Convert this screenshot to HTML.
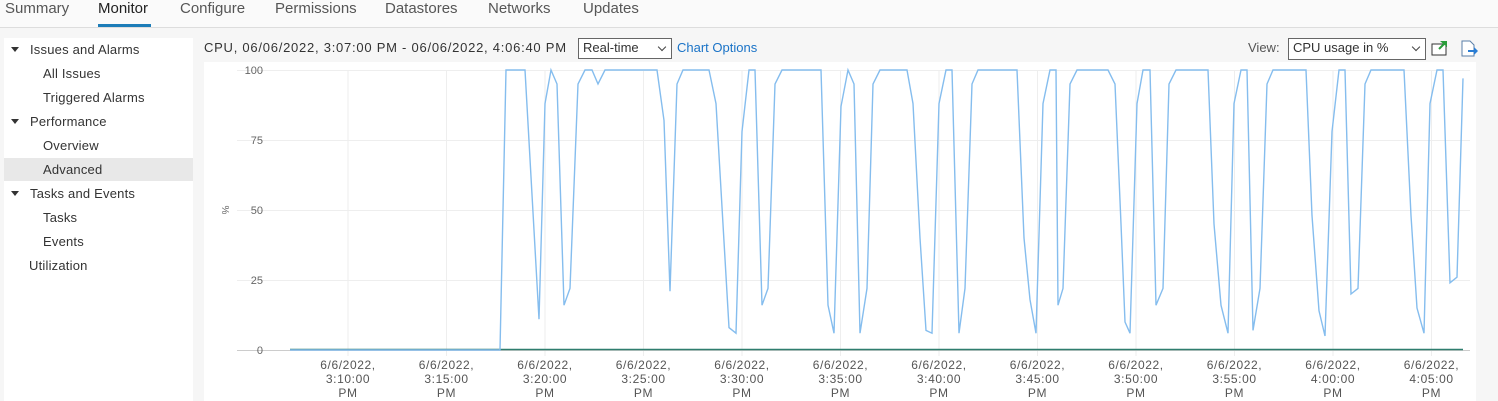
<!DOCTYPE html>
<html><head><meta charset="utf-8"><style>
body{margin:0;width:1498px;height:401px;background:#f6f6f6;font-family:"Liberation Sans",sans-serif;overflow:hidden;position:relative;color:#333}
.tabs{position:absolute;left:0;top:0;width:1498px;height:27px;border-bottom:1px solid #ddd;background:#fafafa}
.tab{position:absolute;top:0;font-size:15px;color:#565656}
.side{position:absolute;left:4px;top:38px;width:189px;height:363px;background:#fff}
.it{position:absolute;font-size:13px;color:#333;letter-spacing:0.2px}
.sel{position:absolute;left:4px;top:158px;width:189px;height:23px;background:#e8e8e8}
.tri{position:absolute;width:0;height:0;border-left:4px solid transparent;border-right:4px solid transparent;border-top:5px solid #333}
.sb{position:absolute;border:1px solid #666;background:#fff;font-size:13px;padding:1px 4px;box-sizing:border-box}
.chev{position:absolute;right:6px;top:5px;width:5px;height:5px;border-right:1.6px solid #444;border-bottom:1.6px solid #444;transform:rotate(45deg)}
</style></head><body>
<div class="tabs">
<span class="tab" style="left:5px">Summary</span>
<span class="tab" style="left:98px;color:#222">Monitor</span>
<div style="position:absolute;left:98px;top:24px;width:53px;height:3px;background:#1d7db8"></div>
<span class="tab" style="left:180px">Configure</span>
<span class="tab" style="left:275px">Permissions</span>
<span class="tab" style="left:385px">Datastores</span>
<span class="tab" style="left:488px">Networks</span>
<span class="tab" style="left:583px">Updates</span>
</div>
<div class="side"></div>
<div class="sel"></div>
<div class="tri" style="left:11px;top:47px"></div><span class="it" style="left:30px;top:42px">Issues and Alarms</span>
<span class="it" style="left:43px;top:66px">All Issues</span>
<span class="it" style="left:43px;top:90px">Triggered Alarms</span>
<div class="tri" style="left:11px;top:119px"></div><span class="it" style="left:30px;top:114px">Performance</span>
<span class="it" style="left:43px;top:138px">Overview</span>
<span class="it" style="left:43px;top:162px">Advanced</span>
<div class="tri" style="left:11px;top:191px"></div><span class="it" style="left:30px;top:186px">Tasks and Events</span>
<span class="it" style="left:43px;top:210px">Tasks</span>
<span class="it" style="left:43px;top:234px">Events</span>
<span class="it" style="left:29px;top:258px">Utilization</span>

<span style="position:absolute;left:204px;top:40px;font-size:13px;color:#333;letter-spacing:0.75px;white-space:nowrap">CPU, 06/06/2022, 3:07:00 PM - 06/06/2022, 4:06:40 PM</span>
<div class="sb" style="left:578px;top:38px;width:94px;height:21px">Real-time<span class="chev"></span></div>
<span style="position:absolute;left:677px;top:40px;font-size:13px;color:#1a73c7">Chart Options</span>
<span style="position:absolute;left:1248px;top:40px;font-size:13px;color:#555">View:</span>
<div class="sb" style="left:1288px;top:38px;width:138px;height:22px">CPU usage in %<span class="chev"></span></div>
<svg style="position:absolute;left:1431px;top:40px" width="18" height="16"><rect x="1" y="4" width="14" height="11" fill="#fff" stroke="#333"/><path d="M9 1h7v6z" fill="#2a9d3a"/><path d="M8 9l6-6" stroke="#2a9d3a" stroke-width="2"/></svg>
<svg style="position:absolute;left:1461px;top:40px" width="18" height="17"><path d="M1 1h8l4 4v11H1z" fill="#fff" stroke="#5a7fa8"/><path d="M7 10h6V7l4 4-4 4v-3H7z" fill="#2a7dd4"/></svg>

<div style="position:absolute;left:204px;top:62px;width:1272px;height:339px;background:#fff"></div>
<svg style="position:absolute;left:0;top:0" width="1498" height="401" id="ch">
<g stroke="#eee" stroke-width="1">
<line x1="237" x2="1470" y1="70.5" y2="70.5"/><line x1="237" x2="1470" y1="140.5" y2="140.5"/><line x1="237" x2="1470" y1="210.5" y2="210.5"/><line x1="237" x2="1470" y1="280.5" y2="280.5"/>
</g>
<g id="vg" stroke="#eee"></g>
<line x1="237" x2="1470" y1="350.5" y2="350.5" stroke="#ccc"/>
<line x1="290" x2="1463" y1="349.5" y2="349.5" stroke="#2e7d6e" stroke-width="1.5"/>
<g font-size="11" fill="#666" text-anchor="end" font-family="Liberation Sans"><text x="263" y="74">100</text><text x="263" y="144">75</text><text x="263" y="214">50</text><text x="263" y="284">25</text><text x="263" y="354">0</text>
<text transform="translate(222,210) rotate(90)" text-anchor="middle" font-size="10">%</text></g>
<polyline id="pl" fill="none" stroke="#85bdee" stroke-width="1.4"/>
<g id="lb" font-size="12" fill="#555" text-anchor="middle" font-family="Liberation Sans" letter-spacing="0.6"></g>
</svg>
<script>
var d=[290,0,500,0,506,100,525,100,539,11,545,88,551,100,557,95,564,16,570,22,578,95,585,100,592,100,598,95,605,100,657,100,664,82,670,21,677,95,683,100,709,100,716,88,729,8,736,6,742,78,749,100,755,100,762,16,768,22,775,95,782,100,821,100,828,16,834,6,841,87,848,100,854,95,860,6,867,22,873,95,880,100,907,100,913,88,920,40,926,7,932,6,939,88,946,100,952,100,959,6,965,22,972,95,978,100,1017,100,1024,40,1030,18,1036,6,1043,88,1050,100,1056,100,1058,16,1063,22,1070,95,1077,100,1108,100,1115,95,1121,45,1125,10,1130,6,1137,88,1143,100,1150,100,1156,16,1163,22,1169,95,1176,100,1208,100,1214,45,1221,16,1228,6,1234,88,1241,100,1247,100,1253,7,1260,22,1267,95,1273,100,1306,100,1312,48,1319,14,1325,5,1332,78,1339,100,1345,100,1351,20,1358,22,1365,95,1371,100,1404,100,1411,48,1417,15,1424,6,1430,88,1437,100,1443,100,1450,24,1457,26,1463,97];
var p=[];for(var i=0;i<d.length;i+=2)p.push(d[i]+","+(350-d[i+1]*2.8).toFixed(1));
document.getElementById('pl').setAttribute('points',p.join(' '));
var vg='',lb='',t=['3:10:00','3:15:00','3:20:00','3:25:00','3:30:00','3:35:00','3:40:00','3:45:00','3:50:00','3:55:00','4:00:00','4:05:00'];
for(var k=0;k<12;k++){var x=348+k*98.5;vg+='<line x1="'+x+'" x2="'+x+'" y1="70" y2="356"/>';
lb+='<text x="'+x+'" y="369">6/6/2022,</text><text x="'+x+'" y="383">'+t[k]+'</text><text x="'+x+'" y="397">PM</text>';}
document.getElementById('vg').innerHTML=vg;document.getElementById('lb').innerHTML=lb;
</script>
</body></html>
